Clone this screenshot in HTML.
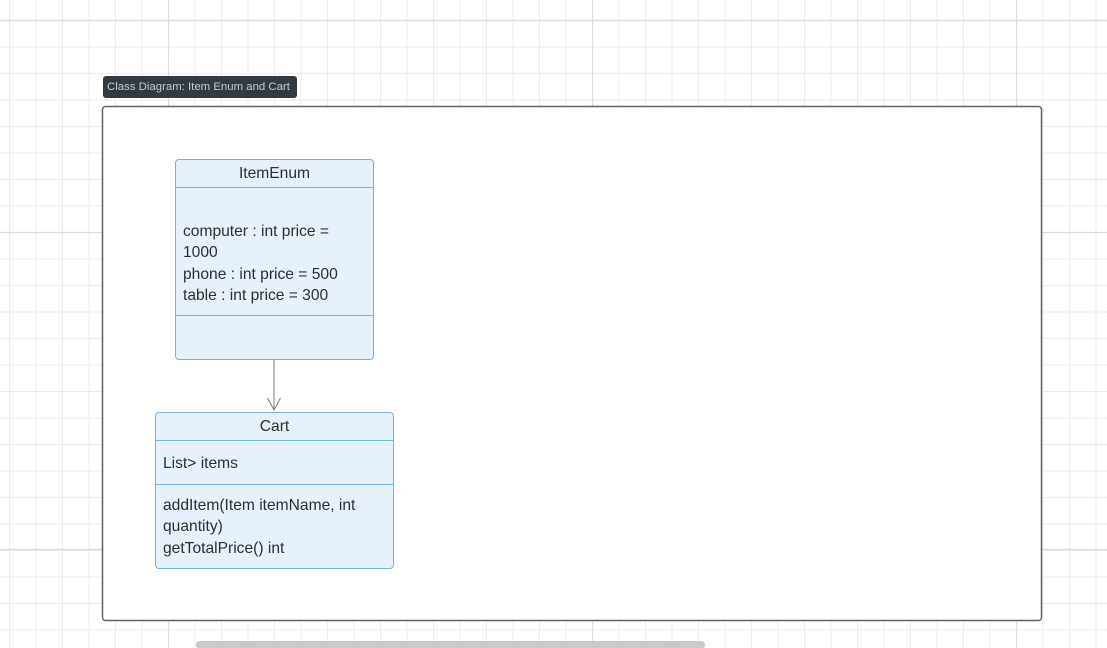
<!DOCTYPE html>
<html><head><meta charset="utf-8"><style>
html,body{margin:0;padding:0;width:1107px;height:648px;overflow:hidden;background:#fff;font-family:"Liberation Sans",Arial,sans-serif;}
.abs{position:absolute;box-sizing:border-box;}
.box{background:#e7f1fc;border:1.5px solid #6cb2f5;border-radius:4px;color:#2e2e2e;font-size:15.6px;}
.sec{position:absolute;left:0;right:0;border-top:1.5px solid #6cb2f5;}
.t{position:absolute;left:7px;line-height:21.3px;white-space:nowrap;}
</style></head><body>
<svg class="abs" style="left:0;top:0" width="1107" height="648">
<defs>
<pattern id="g" x="9" y="20" width="26.5" height="26.5" patternUnits="userSpaceOnUse">
<path d="M0 0.5H26.5M0.5 0V26.5" stroke="#ebebeb" stroke-width="1" fill="none"/></pattern>
</defs>
<rect width="1107" height="648" fill="url(#g)"/>
<g stroke="#dcdcdc" stroke-width="1.2">
<line x1="168.5" y1="0" x2="168.5" y2="648"/><line x1="592.5" y1="0" x2="592.5" y2="648"/><line x1="1016.5" y1="0" x2="1016.5" y2="648"/>
<line x1="0" y1="20.5" x2="1107" y2="20.5"/><line x1="0" y1="232.5" x2="1107" y2="232.5"/><line x1="0" y1="549.5" x2="1107" y2="549.5"/>
</g>
<rect x="102.5" y="106.5" width="939" height="514" rx="3" fill="#fff" stroke="#5f6368" stroke-width="1.5"/>
<line x1="274" y1="359" x2="274" y2="410" stroke="#777" stroke-width="1"/>
<path d="M267.5 398 L274 410 L280.5 398" stroke="#777" fill="none" stroke-width="1"/>
<rect x="196" y="641" width="509" height="8" rx="4" fill="#c9c9c9"/>
</svg>
<div class="abs" style="left:103px;top:76px;width:194px;height:22px;background:#343a41;border-radius:3px;color:#c8cbd0;font-size:11.4px;line-height:22px;padding-left:4px;white-space:nowrap">Class Diagram: Item Enum and Cart</div>
<div class="abs box" style="left:175px;top:159px;width:199px;height:201px;">
<div style="position:absolute;left:0;right:0;top:5px;text-align:center">ItemEnum</div>
<div class="sec" style="top:27px"></div>
<div class="t" style="top:61px">computer : int price =<br>1000<br>phone : int price = 500<br>table : int price = 300</div>
<div class="sec" style="top:155px"></div>
</div>
<div class="abs box" style="left:155px;top:412px;width:239px;height:157px;">
<div style="position:absolute;left:0;right:0;top:5px;text-align:center">Cart</div>
<div class="sec" style="top:27px"></div>
<div class="t" style="top:40px">List&gt; items</div>
<div class="sec" style="top:71px"></div>
<div class="t" style="top:82px">addItem(Item itemName, int<br>quantity)<br>getTotalPrice() int</div>
</div>
</body></html>
